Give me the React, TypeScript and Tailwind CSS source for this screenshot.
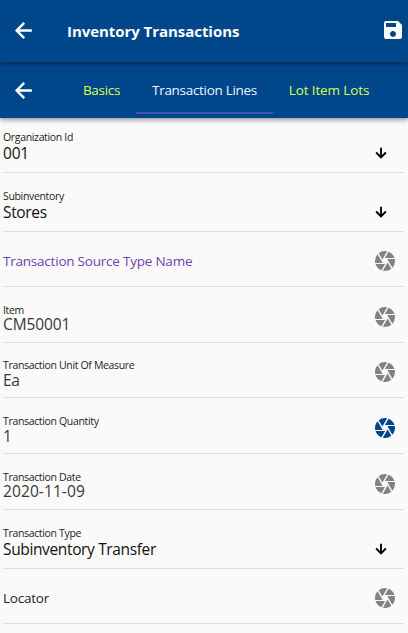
import React from "react";
import { MdCamera, MdSave } from "react-icons/md";

type Field = {
  label: string;
  value?: string;
  kind: "select" | "scan";
  height: string;
  tracking?: string;
  color?: string;
  scanColor?: string;
  gap?: string;
  bottom?: string;
};

const fields: Field[] = [
  { label: "Organization Id", value: "001", kind: "select", height: "h-[55px]", tracking: "tracking-[-0.2px]" },
  { label: "Subinventory", value: "Stores", kind: "select", height: "h-[59px]", tracking: "tracking-[-0.35px]" },
  { label: "Transaction Source Type Name", kind: "scan", height: "h-[55px]", color: "text-[#6f3fb0]" },
  { label: "Item", value: "CM50001", kind: "scan", height: "h-[56px]", tracking: "tracking-[-0.1px]", gap: "h-[13px]", bottom: "pb-[10px]" },
  { label: "Transaction Unit Of Measure", value: "Ea", kind: "scan", height: "h-[55px]", tracking: "tracking-[-0.3px]", gap: "h-[14px]", bottom: "pb-[9px]" },
  { label: "Transaction Quantity", value: "1", kind: "scan", height: "h-[56px]", gap: "h-[14px]", bottom: "pb-[9px]", scanColor: "text-[#00468b]" },
  { label: "Transaction Date", value: "2020-11-09", kind: "scan", height: "h-[56px]", tracking: "tracking-[0.1px]", gap: "h-[13px]", bottom: "pb-[10px]" },
  { label: "Transaction Type", value: "Subinventory Transfer", kind: "select", height: "h-[59px]", tracking: "tracking-[-0.36px]" },
  { label: "Locator", kind: "scan", height: "h-[55px]" },
];

function BackArrow({ className }: { className: string }) {
  return (
    <svg viewBox="0 0 24 24" fill="none" stroke="currentColor" strokeWidth="2.3" className={className}>
      <path d="M20 12H5.6M12.7 4.7 5.4 12l7.3 7.3" />
    </svg>
  );
}

function DownArrow({ className }: { className: string }) {
  return (
    <svg viewBox="0 0 24 24" fill="none" stroke="currentColor" strokeWidth="2.8" className={className}>
      <path d="M12 4v14.4M4.7 11.3l7.3 7.3 7.3-7.3" />
    </svg>
  );
}

function FieldRow({ field }: { field: Field }) {
  const isSelect = field.kind === "select";
  return (
    <div className={`flex items-end justify-between border-b border-[#dddddd] ${field.height}`}>
      {field.value ? (
        <div className={`flex flex-col whitespace-nowrap ${field.bottom ?? "pb-[11px]"}`}>
          <span className={`text-[10.5px] leading-[14px] tracking-[-0.34px] text-[#1c1c1c] ${field.gap ?? "h-[15px]"}`}>
            {field.label}
          </span>
          <span
            className={`text-[15.5px] leading-4 ${field.tracking ?? ""} ${isSelect ? "text-[#111111]" : "text-[#383838]"}`}
          >
            {field.value}
          </span>
        </div>
      ) : (
        <span
          className={`pb-4 text-[13.5px] leading-[18px] tracking-[-0.22px] whitespace-nowrap ${field.color ?? "text-[#252525]"}`}
        >
          {field.label}
        </span>
      )}
      {isSelect ? (
        <DownArrow className="mr-[15px] mb-[11px] size-4 text-black" />
      ) : (
        <MdCamera className={`mr-[7px] mb-[13px] size-6 ${field.scanColor ?? "text-[#828282]"}`} />
      )}
    </div>
  );
}

export default function App() {
  return (
    <div className="flex h-[633px] w-[408px] flex-col overflow-hidden bg-[#fafafa] font-['Open_Sans','Noto_Sans',sans-serif]">
      <header className="relative z-20 flex h-[62px] shrink-0 items-center bg-[#00468b] pr-[3px] pl-[11px] text-white shadow-[0_1px_5px_rgba(0,0,0,0.55)]">
        <BackArrow className="-mt-[2px] size-[25px]" />
        <h1 className="ml-[31px] flex-1 text-[15px] font-bold tracking-[-0.05px] whitespace-nowrap">
          Inventory Transactions
        </h1>
        <MdSave className="-mt-[2px] size-6" />
      </header>
      <nav className="relative z-10 flex h-14 shrink-0 items-center bg-[#00468b] pl-[11px] text-[13.5px] whitespace-nowrap shadow-[0_2px_5px_rgba(0,0,0,0.4)]">
        <BackArrow className="size-[25px] text-white" />
        <span className="ml-[31px] flex h-full w-[69px] items-center justify-center tracking-[-0.3px] text-[#d6ff4f]">
          Basics
        </span>
        <span className="flex h-full w-[137px] items-center justify-center tracking-[-0.3px] text-[#eef6ff]">
          <span>Transaction Lines</span>
          <i className="absolute bottom-1 h-[2px] w-[137px] bg-[#3f51b5]" />
        </span>
        <span className="flex h-full w-[112px] items-center justify-center tracking-[-0.12px] text-[#d6ff4f]">
          Lot Item Lots
        </span>
      </nav>
      <main className="flex flex-col pr-1 pl-[3px]">
        {fields.map((field) => (
          <FieldRow key={field.label} field={field} />
        ))}
      </main>
    </div>
  );
}
